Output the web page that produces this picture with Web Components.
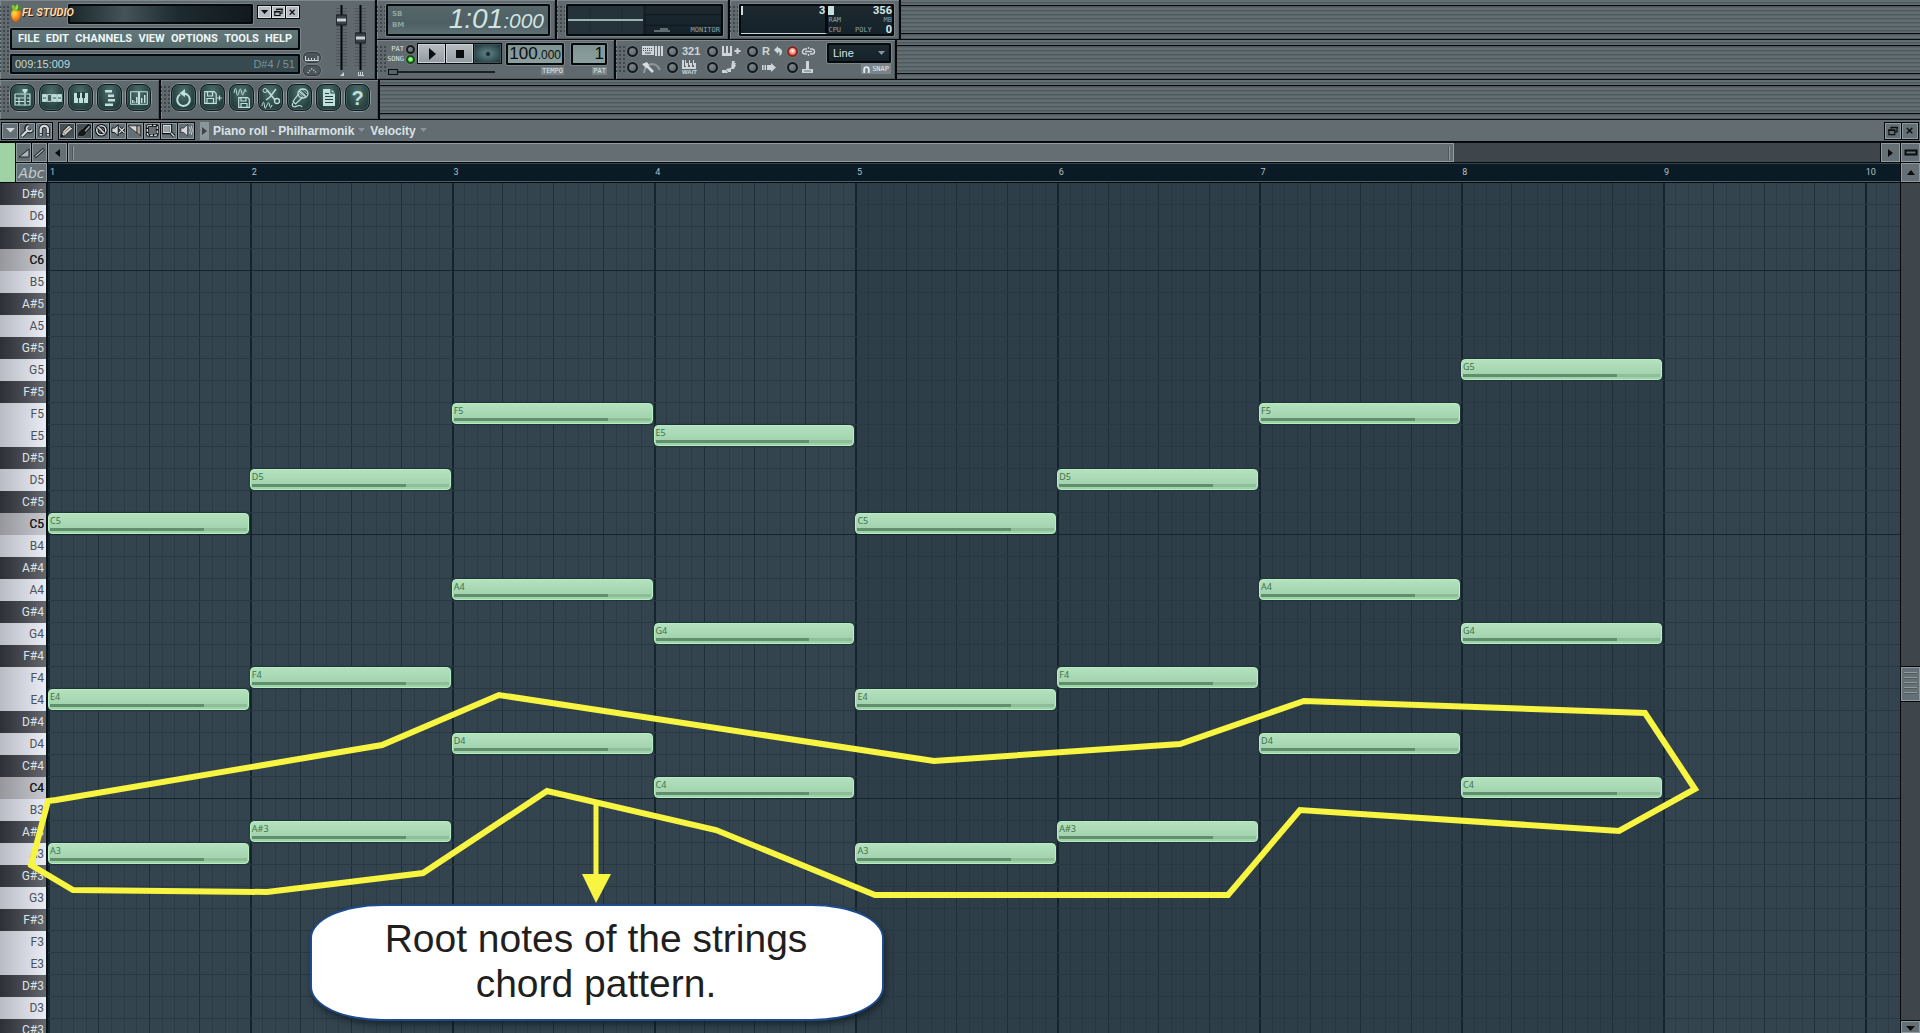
<!DOCTYPE html>
<html lang="en">
<head>
<meta charset="utf-8">
<title>FL Studio - Piano roll</title>
<style>
  html, body { margin: 0; height: 100%; }
  body { overflow: hidden; background: #5d676c; font-family: "Liberation Sans", Arial, sans-serif; }
</style>
</head>
<body>
<fl-studio></fl-studio>
<script>
const BASE = `*{box-sizing:border-box} button,select,input{margin:0;font:inherit;color:inherit}
button{padding:0;border:0;background:none;display:grid;place-items:center;cursor:pointer}`;
function define(name, css, html) {
  const t = document.createElement('template');
  customElements.define(name, class extends HTMLElement {
    constructor() { super(); this.attachShadow({ mode: 'open' }); }
    connectedCallback() {
      if (this.shadowRoot.childNodes.length) return;
      t.innerHTML = `<style>${BASE}${css}</style>` + (typeof html === 'function' ? html(this) : html);
      this.shadowRoot.append(t.content.cloneNode(true));
    }
  });
}

/* ---------- icons: [width, height, markup] ---------- */
const L = '#bfe0dc', K = '#0b0d0e', W = '#d3d8da';
const ln = (d, c = L, w = 1.5, x = '') => `<path d="${d}" fill="none" stroke="${c}" stroke-width="${w}" ${x}/>`;
const fl = (d, c = L, x = '') => `<path d="${d}" fill="${c}" ${x}/>`;
const ICONS = {
  fruit: [12, 18, `<defs><radialGradient id="g" cx=".35" cy=".3" r=".8"><stop offset="0" stop-color="#ffe34a"/><stop offset=".45" stop-color="#ff9a1c"/><stop offset="1" stop-color="#c8430a"/></radialGradient></defs>
    <path d="M7 6C10 5 12 8 11 11c-1 4-3 7-5 7-3 0-5-5-5-8 0-4 3-5 6-4z" fill="url(#g)"/>
    <path d="M5 7C2 6 1 3 2 1c3 0 5 2 4 6z" fill="#7fbf2c"/><path d="M6 7c0-3 2-5 5-5 1 2-1 5-5 5z" fill="#3f8f22"/><path d="M6 7C5 4 6 2 7 0c2 2 1 5-1 7z" fill="#a6d94a"/>`],
  down: [9, 6, fl('M0 0h9L4.500 5z', K)],
  downlt: [10, 6, fl('M0 0h10L5 5z', W)],
  downdim: [7, 5, fl('M0 0h7L3.500 4z', '#8a949a')],
  restore: [11, 10, ln('M3.500 3V1.500h6.500V6.500H8M1 4.500h6.500v5H1z', K, 1.3) + fl('M3 1h8v1.500H3zM0 4h8v1.500H0z', K)],
  close: [8, 8, ln('M1 1l6 6M7 1L1 7', K, 1.6)],
  left: [5, 8, fl('M5 0v8L0 4z', K)],
  right: [5, 8, fl('M0 0v8l5-4z', K)],
  up: [8, 5, fl('M0 5h8L4 0z', K)],
  bar: [14, 7, `<rect x="1.500" y="1.500" width="11" height="4" fill="none" stroke="${K}" stroke-width="2"/>`],
  play: [8, 12, fl('M1 0v12l7-6z', K)],
  stop: [8, 8, fl('M0 0h8v8H0z', K)],
  rec: [8, 8, `<circle cx="4" cy="4" r="2.500" fill="#1a2a2c" stroke="#5c7b7e" stroke-width=".7"/>`],
  playlist: [18, 18, ln('M1 5h9M1 5v11h9M1 9h9M1 12.500h9M5 9v7M12 5h4v11h-4M13 9h3M13 12.500h3', L, 1.2) + fl('M8.500 0h5v2L11.700 4v13h-1.400V4L8.500 2z')],
  steps: [20, 8, [0, 5, 10, 15].map((x, i) => `<rect x="${x + .6}" y=".6" width="3.800" height="6.800" fill="${i == 1 ? '#3f5f5f' : L}" stroke="${L}" stroke-width=".9"/>` + fl(`M${x + 1} 3.500h3v1h-3z`, '#34524f')).join('')],
  keys: [16, 12, fl('M1 1h4v10H1zM6 1h4v10H6zM11 1h4v10h-4z') + fl('M4 0h3v6H4zM9 0h3v6H9z', '#26403f')],
  browser: [10, 16, fl('M0 0h7v2.500H0zM3 4.500h6V7H3zM3 9h7v2.500H3zM0 13.500h8V16H0z')],
  mixer: [18, 14, ln('M.7.700h7.800v12.600H.7zM9.500.700h7.800v12.600H9.500z', L, 1.1) + fl('M2 9h1.500v3H2zM4.200 10.500h1V12h-1zM6 6h1.500v6H6zM11 7h1.500v5H11zM14 4h1.500v8H14z')],
  undo: [17, 18, ln('M5 5.500A6.300 6.300 0 1 0 12 5.500L8 4', L, 2) + fl('M10 0L4.500 4.200 10 8z')],
  save: [18, 15, ln('M.7 1.700h9.500l2 2v9.600H.7z', L, 1.2) + ln('M3.500 2v4h5V2M3 13V8.500h6.500V13M13 8h5M15.500 5.500v5', L, 1.2)],
  savewav: [18, 20, ln('M1 5c1-6 2-6 2.500-1s1.500 4 2.500 0 1.500-4 2.500 0 1.500 4 2.500 0 1.500-4 2 0', L, 1) + ln('M5.700 9.700h9l1.600 1.600v8H5.700zM8 10v3h5v-3M8 19v-3.500h6V19', L, 1.2)],
  cut: [20, 20, ln('M6 2l8 10M15 1L9 9l-4 3', L, 1.5) + `<circle cx="4" cy="2.500" r="2" fill="none" stroke="${L}"/><circle cx="16" cy="13" r="2.500" fill="none" stroke="${L}" stroke-width="1.300"/>` + ln('M1 18c1-5 2-5 2.500 0s1.500 1 2.500-1 1.500-4 2.500 0 1.500 3 2.500 0', L, 1)],
  mic: [18, 20, `<ellipse cx="12" cy="5.500" rx="5" ry="4.500" fill="none" stroke="${L}" stroke-width="1.300"/>` + ln('M8 3l7 6M7.500 6L2 13.500l2.500 2.500L11 10M2 15c-2 3 1 5 4 3 3-1 4-1 5 1', L, 1.2) + ln('M9 2l6 6M11 1l5 5M8 5l4 4', L, .6)],
  doc: [14, 17, fl('M1 0h8l4 4v13H1z') + ln('M3 4.500h4M3 7.500h8M3 10.500h8M3 13.500h8M9 0v4h4', '#234240', 1.1)],
  wrench: [15, 15, ln('M2 13.500L9 6.500', '#1a1e20', 4.5) + ln('M9.500 1.500A3.500 3.500 0 1 0 13.500 6', '#1a1e20', 4) + ln('M2 13.500L9 6.500', W, 2.5) + ln('M9.500 2A3.200 3.200 0 1 0 13.500 6', W, 2)],
  magnet: [14, 14, ln('M3 13.500V6a4 4 0 0 1 8 0v7.500', '#1a1e20', 4.6) + ln('M3 13V6a4 4 0 0 1 8 0v7', W, 2.6) + fl('M1.500 10h3v1h-3zM9.500 10h3v1h-3z', '#3a4043')],
  pencil: [15, 15, fl('M1 14l2-6L10 1l4 4-8 8z', '#d9d4c6', `stroke="${K}"`) + ln('M5 9l7-6M7 11l7-6M3 9l4 4', '#5a5c58', 1) + fl('M1 14l1-3 2 2z', K)],
  brush: [16, 15, fl('M0 13c1-4 3-6 6-8l5 5c-2 4-6 5-11 3z', '#15181a', 'stroke="#99a2a6" stroke-width=".5"') + ln('M8 8L14.500 1.500', K, 5) + ln('M9 8L14 2.500', '#9ba3a7', 1.8)],
  no: [14, 14, `<circle cx="7" cy="7" r="5" fill="none" stroke="${K}" stroke-width="4"/><circle cx="7" cy="7" r="5" fill="none" stroke="${W}" stroke-width="1.800"/>` + ln('M3.500 3.500l7 7', K, 3.5) + ln('M3.500 3.500l7 7', W, 1.8)],
  mute: [16, 14, fl('M1 4.500h3L8 1v12L4 9.500H1z', W, `stroke="${K}"`) + ln('M9 4l6 6M15 4l-6 6', K, 3.2) + ln('M9 4l6 6M15 4l-6 6', W, 1.5)],
  slice: [16, 14, fl('M0 2h10v8z', W, `stroke="${K}" stroke-width=".7"`) + fl('M10 2h4v11l-4-3z', '#a9a196', `stroke="${K}" stroke-width=".7"`)],
  select: [14, 14, `<rect x="1.500" y="1.500" width="11" height="11" rx="2" fill="none" stroke="${K}" stroke-width="3"/><rect x="1.500" y="1.500" width="11" height="11" rx="2" fill="none" stroke="${W}" stroke-width="1.500" stroke-dasharray="3 1.500"/>`],
  zoom: [15, 15, fl('M1 1h9v9H1z', '#98a2a6', `stroke="${K}" stroke-width="2.500"`) + ln('M1.500 1.500h8v8h-8z', W, 1.2) + ln('M9.500 9.500l4 4', K, 3.6) + ln('M10 10l3.500 3.500', W, 1.6)],
  speaker: [14, 14, fl('M1 4.500h3L8.500.500v13L4 9.500H1z', W, `stroke="${K}" stroke-width=".7"`) + ln('M10.500 3q2 4 0 8M12.500 2q2.500 5 0 10', W, 1)],
  tri: [12, 10, fl('M1 9L11 1v8z', '#aab3b7', `stroke="${K}" stroke-width=".8"`)],
  line: [11, 10, ln('M1 9L10 1', K, 3) + ln('M1.500 8.500l8-7', '#b8c0c4', 1.3)],
  kbd: [21, 11, fl('M0 0h12v9H0z', '#cdd5d8') + ln('M1 2.500h10M1 4.500h10', '#49555a', 1, 'stroke-dasharray="1 1"') + ln('M3 7h6', '#49555a', 1) + fl('M13 0h2v10h-2zM16 0h2v10h-2zM19 0h2v10h-2z', '#cdd5d8')],
  wait: [14, 9, fl('M0 0h2v9H0zM3 0h1v6H3zM4 3h2v6H4zM7 0h1v5H7zM8 3h2v6H8zM11 0h1v5h-1zM12 3h2v6h-2zM0 7h14v2H0z', '#cdd5d8')],
  keysplus: [19, 11, fl('M0 0h2v10H0zM4 0h2v10H4zM8 0h2v10H8zM0 7h10v3H0z', '#cdd5d8') + ln('M12.500 5h6M15.500 2v6', '#cdd5d8', 2)],
  turn: [8, 10, fl('M4 0v2c3 0 4 2 4 4s-1 3-3 4c1-2 1-4-1-4v2L0 4z', '#cdd5d8')],
  link: [13, 9, ln('M5 2H3a2.500 2.500 0 0 0 0 5h2M8 2h2a2.500 2.500 0 0 1 0 5H8M3 4.500h7M6.500 0v2M6.500 7v2', '#cdd5d8', 1.4)],
  blend: [19, 13, ln('M2 12C3 3 13-1 18 9', '#8d979b', 2.2) + ln('M3 3l8 8', '#d7dee0', 2.6) + fl('M0 3l5-2 2 3-3 3z', '#d7dee0')],
  stair: [14, 12, fl('M10 0h3l-1 2h2l-1 2h1l-2 4H9zM4 8l5-1v4H6zM0 9h4l2 3H0z', '#cdd5d8')],
  arrows: [14, 9, fl('M0 2h1.500v5H0zM2.500 2H4v5H2.500zM5 2h4V0l5 4.500L9 9V7H5z', '#cdd5d8')],
  joy: [11, 13, fl('M4 0h3v8H4zM0 8h11v4H0z', '#cdd5d8') + fl('M2 9.500h7v1H2z', '#6a767b')],
  mag2: [7, 7, ln('M1.200 7V3.500a2.300 2.300 0 0 1 4.600 0V7', '#e3e9ea', 1.8)],
  wave: [22, 6, ln('M0 4h6M7 5V1M9 1v4M11 5V1M13 1v4M15 5V3', '#a5babd', 1)],
};
define('fl-icon', ':host{display:block;line-height:0} svg{display:block;overflow:visible}',
  h => { const [w, t, m] = ICONS[h.getAttribute('name')]; return `<svg width="${w}" height="${t}" viewBox="0 0 ${w} ${t}" aria-hidden="true">${m}</svg>`; });
const ic = n => `<fl-icon name="${n}"></fl-icon>`;

/* ---------- chrome ---------- */
define('fl-panel', `
  :host{display:flex;height:100%;flex:none;border-right:2px solid #060809;border-bottom:1px solid #060809;
    background:#5f696e;box-shadow:inset 1px 1px #7d888d,inset -1px -1px #4e585c}
  .grip{width:9px;flex:none;margin:5px 0;background:radial-gradient(circle at 2px 2px,#3e474b 0 1px,transparent 1px) 2px 0/4px 4px repeat}
  .body{flex:1;min-width:0;display:flex}`,
  '<div class="grip"></div><div class="body"><slot></slot></div>');

define('fl-rack', `
  :host{display:block;flex:1;height:40px;
    background:linear-gradient(#060809,#060809) 0 5px/100% 1px no-repeat,linear-gradient(#060809,#060809) 0 33px/100% 1px no-repeat,
    linear-gradient(#060809,#060809) 0 39px/100% 1px no-repeat,repeating-linear-gradient(#626e72 0 2px,#4f595e 2px 3px,#59646a 3px 4px)}`, '');

define('fl-lcd', `
  :host{display:flex;border:2px solid #05090b;border-radius:1px;outline:1px solid #78848a;color:#c4d8d8}
  :host([tone=green]){background:linear-gradient(#56686a,#4d5f62 60%,#5d7072)}
  :host([tone=menu]){background:linear-gradient(#64787b,#566a6c)}
  :host([tone=hint]){background:#374a4f}
  :host([tone=pale]){background:linear-gradient(#7f9393,#8ca09f);color:#0a0f10}
  :host([tone=dark]){background:linear-gradient(#1d292f,#16222a)}`, '<slot></slot>');

define('fl-led', `
  :host{display:block;width:11px;height:11px}
  input{appearance:none;display:block;width:11px;height:11px;border-radius:50%;border:2px solid #14191b;outline:1px solid #87928f55;
    background:radial-gradient(circle at 35% 30%,#7c878b,#59646a)}
  :host([tone=red]) input:checked{background:radial-gradient(circle at 50% 40%,#fff,#ff7a66 60%,#f04a3c);border-color:#7d2a24}
  :host([tone=green]) input{width:9px;height:9px}
  :host([tone=green]){width:9px;height:9px}
  :host([tone=green]) input:checked{background:radial-gradient(circle at 50% 40%,#d8ffd0,#45f03c 60%,#1fb01b);border-color:#1c4a1a}`,
  h => `<input type="${h.getAttribute('kind') || 'checkbox'}" aria-label="${h.getAttribute('label')}" ${h.hasAttribute('on') ? 'checked' : ''}>`);

define('fl-main', `
  :host{display:block;width:377px;height:80px;flex:none}
  fl-panel{height:80px}
  .left{width:290px;flex:none;margin:4px 0 0 1px;display:flex;flex-direction:column}
  .top{display:flex;height:20px}
  .brand{display:flex;width:58px;flex:none;position:relative;z-index:1}
  .brand b{font:italic bold 11px/18px Roboto,"Liberation Sans",sans-serif;color:#ffd9a8;text-shadow:1px 1px #301c0c;white-space:nowrap}
  .screen{flex:1;background:linear-gradient(90deg,#1b272b,#445459 30%,#1d2a2f 60%,#11191d)}
  .win{display:flex;margin:1px 0 5px 4px;border:1px solid #05090b;background:#05090b;gap:1px;align-self:start}
  .win button{width:13px;height:12px;background:#b4bcc1;border:1px solid #dbe0e3}
  .win fl-icon{zoom:.8}
  nav{display:flex;flex:1;align-items:center;justify-content:space-between;padding:0 6px}
  nav a{color:#eef7f7;text-decoration:none;font:bold 11px/16px Roboto,"Liberation Sans",sans-serif}
  .menu{height:22px;margin-top:4px}
  .hint{height:20px;margin-top:4px;align-items:center;justify-content:space-between;padding:0 3px;font-size:11px;line-height:16px}
  .hint span:last-child{color:#7e9298}
  .mini{display:flex;flex-direction:column;justify-content:flex-end;gap:2px;width:18px;flex:none;margin:0 0 3px 3px}
  .mini button{height:11px;border-radius:5px;background:#4b555a;border:1px solid #343c40;outline:1px solid #727d82}
  .mini svg,.fader svg{display:block}
  .faders{flex:1;display:flex;justify-content:center;gap:8px;padding:5px 0 0 6px}`,
  `<fl-panel><div class="left">
    <div class="top"><div class="brand">${ic('fruit')}<b>FL STUDIO</b></div><fl-lcd class="screen"></fl-lcd>
      <div class="win"><button aria-label="Minimize">${ic('down')}</button><button aria-label="Restore">${ic('restore')}</button><button aria-label="Close">${ic('close')}</button></div></div>
    <fl-lcd tone="menu" class="menu"><nav>${['FILE', 'EDIT', 'CHANNELS', 'VIEW', 'OPTIONS', 'TOOLS', 'HELP'].map(t => `<a href="#">${t}</a>`).join('')}</nav></fl-lcd>
    <fl-lcd tone="hint" class="hint"><span>009:15:009</span><span>D#4 / 51</span></fl-lcd></div>
    <div class="mini"><button aria-label="Meter"><svg width="14" height="6"><path d="M.5 1v4M3.500 3v2M6.500 3v2M9.500 3v2M13 1v4M0 5.500h14" stroke="#cfd8da" fill="none"/></svg></button>
      <button aria-label="Scope"><svg width="14" height="6"><path d="M3 5l1-2 3-2 3 2 1 2" stroke="#cfd8da" stroke-dasharray="1 1.500" fill="none" stroke-width="1.500"/></svg></button></div>
    <div class="faders">${[[16, 'M1 4l4-4v4z'], [34, 'M0 0h1v4H0zM2 0h1v4H2zM4 0h1v4H4zM0 3h6v1H0z']].map(([y, d]) => `<div class="fader"><svg width="11" height="72">
      <path d="M2 3v60M9 3v60" stroke="#4c565b" stroke-width="4" stroke-dasharray="1 2"/><path d="M5.500 0v65" stroke="#05090b" stroke-width="2"/>
      <rect x="0" y="${y - 6}" width="11" height="10" rx="1" fill="#394247" stroke="#15191b"/><path d="M1 ${y - 1}h9" stroke="#c9d1d4" stroke-width="3"/>
      <path d="${d}" transform="translate(3 67)" fill="#c9d1d4"/></svg></div>`).join('')}</div></fl-panel>`);

define('fl-displays', `
  :host{display:flex;height:40px}
  fl-lcd{margin:4px 5px 3px 0}
  .time{width:180px}.scope{width:173px}.cpu{width:171px}
  .clock{flex:1;padding:0 4px;align-items:center;justify-content:space-between}
  .sb{font:bold 7px/11px "DejaVu Sans",sans-serif;color:#8fa3a4}
  .num{font:italic 28px/28px "Liberation Sans",Arial,sans-serif;color:#d0e4e3;white-space:nowrap}
  .num small{font-size:21px}
  .mon{flex:1;position:relative}
  .mon svg{display:block;width:100%;height:100%}
  .tag{position:absolute;right:1px;bottom:0;font:7px/8px "DejaVu Sans Mono",monospace;color:#8ba2a6}
  .mw{position:absolute;left:86px;bottom:1px}
  .load{flex:1}
  .a,.b{display:flex;flex-direction:column;justify-content:space-between}
  .a{flex:85;border-right:3px solid #05090b;border-bottom:1px solid #c4d8d8}
  .b{flex:64;font:7px/8px "DejaVu Sans Mono",monospace;color:#8ba2a6}
  .r{display:flex;justify-content:space-between;align-items:center;height:9px}
  .r b{font:bold 11px/10px Roboto,"Liberation Sans",sans-serif;color:#d5e9e8}
  .r i{height:9px;background:#c9dede;width:2px}.b .r i{width:6px}`,
  `<fl-panel class="time"><fl-lcd tone="green" class="clock"><div class="sb"><div>SB</div><div>BM</div></div><div class="num">1:01<small>:000</small></div></fl-lcd></fl-panel>
   <fl-panel class="scope"><fl-lcd tone="dark" class="mon"><svg viewBox="0 0 151 29" preserveAspectRatio="none"><path d="M0 0h74v29H0z" fill="#26323a"/><path d="M75 9h76M75 20h76M76 0v29" stroke="#0e171c"/><path d="M22 0v29M53 0v29" stroke="#212c33"/><path d="M0 14.500h74" stroke="#c2e0dd" stroke-width="1.500"/></svg><fl-icon class="mw" name="wave"></fl-icon><span class="tag">MONITOR</span></fl-lcd></fl-panel>
   <fl-panel class="cpu"><fl-lcd tone="dark" class="load"><div class="a"><div class="r"><i></i><b>3</b></div></div>
     <div class="b"><div class="r"><i></i><b>356</b></div><div class="r"><span>RAM</span><span>MB</span></div><div class="r"><span>CPU</span><span>POLY</span><b>0</b></div></div></fl-lcd></fl-panel>
   <fl-rack></fl-rack>`);

define('fl-transport', `
  :host{display:flex;height:40px}
  .tr{width:239px}.op{width:281px}
  .grp{display:flex;flex-direction:column;flex:1}
  .ctl{display:flex;gap:2px;height:22px;margin:3px 0 0 1px}
  .ps{display:grid;grid-template-columns:17px 9px;column-gap:2px;row-gap:1px;align-content:center;align-items:center;justify-items:end;font:7px/9px "DejaVu Sans Mono",monospace;color:#dbe2e3}
  .btns{display:flex;border:1px solid #05090b;gap:1px;background:#05090b;height:21px}
  .btns button{width:27px;background:linear-gradient(#b5bcc0,#949da2);border:1px solid #ccd2d5}
  .btns button:last-child{background:radial-gradient(#64878b,#1d3338);border-color:#3c5458}
  input[type=range]{appearance:none;display:block;width:107px;height:8px;margin:3px 0 0 2px;background:linear-gradient(#1a2226,#1a2226) 0 3px/100% 2px no-repeat}
  input[type=range]::-webkit-slider-thumb{appearance:none;width:10px;height:6px;background:#59646a;border:1px solid #0b0f11}
  .n{display:flex;flex-direction:column;align-items:flex-end;flex:none;margin:3px 7px 0 0;gap:2px}
  .n fl-lcd{height:22px;align-items:baseline;justify-content:flex-end;padding-right:1px;font:17px/18px "Liberation Sans",Arial,sans-serif}
  .n small{font-size:12px}
  .t fl-lcd{width:58px}.p fl-lcd{width:36px}
  .tag{font:7px/8px "DejaVu Sans Mono",monospace;color:#dfe6e8;background:#78838a;padding:0 1px}
  .g{display:grid;grid-template-columns:repeat(5,40px);grid-auto-rows:16px;align-items:center;margin:3px 0 0 2px;height:32px}
  .c{display:flex;align-items:center;gap:4px}
  .c b{font:bold 11px/12px "Liberation Sans",sans-serif;color:#cdd5d8}
  .stack{display:flex;flex-direction:column;font:bold 6px/6px "Liberation Sans",sans-serif;color:#cdd5d8}
  .sn{flex:1;display:flex;flex-direction:column;align-items:flex-end;margin:3px 5px 0 0}
  .sn fl-lcd{width:64px;height:20px;align-items:center;position:relative}
  select{appearance:none;border:0;background:transparent;width:100%;height:16px;padding:0 4px;font:11px/16px "Liberation Sans",sans-serif;color:#d5e4e6}
  .dd{position:absolute;right:4px;top:6px;pointer-events:none}
  .snap{display:flex;align-items:center;gap:2px;padding:0 2px;background:#78838a;height:10px;margin-top:1px;font:7px/10px "DejaVu Sans Mono",monospace;color:#e3e9ea}`,
  `<fl-panel class="tr"><div class="grp"><div class="ctl"><div class="ps"><span>PAT</span><fl-led tone="green" kind="radio" label="Pattern mode"></fl-led><span>SONG</span><fl-led tone="green" kind="radio" label="Song mode" on></fl-led></div>
     <div class="btns"><button aria-label="Play">${ic('play')}</button><button aria-label="Stop">${ic('stop')}</button><button aria-label="Record">${ic('rec')}</button></div></div>
     <input type="range" min="0" max="100" value="0" aria-label="Song position"></div>
     <div class="n t"><fl-lcd tone="pale"><span>100<small>.000</small></span></fl-lcd><span class="tag">TEMPO</span></div>
     <div class="n p"><fl-lcd tone="pale"><span>1</span></fl-lcd><span class="tag">PAT</span></div></fl-panel>
   <fl-panel class="op"><div class="g">
     ${[['Typing keyboard', ic('kbd')], ['Countdown', '<b>321</b>'], ['Blend notes', ic('keysplus')], ['Loop record', `<b>R</b>${ic('turn')}`], ['Multilink', ic('link'), 1],
        ['Overdub', ic('blend')], ['Wait for input', `<span class="stack">${ic('wait')}<span>WAIT</span></span>`], ['Step edit', ic('stair')], ['Auto-scroll', ic('arrows')], ['Controller', ic('joy')]]
       .map(([l, x, on]) => `<div class="c"><fl-led tone="red" label="${l}" ${on ? 'on' : ''}></fl-led>${x}</div>`).join('')}
     </div><div class="sn"><fl-lcd tone="dark"><select aria-label="Snap"><option>Line</option></select><fl-icon class="dd" name="downdim"></fl-icon></fl-lcd><span class="snap">${ic('mag2')}SNAP</span></div></fl-panel>
   <fl-rack></fl-rack>`);

define('fl-shortcuts', `
  :host{display:flex;height:40px}
  .one{width:161px}.two{width:219px}
  .r{display:flex;gap:2px;margin:3px 0 0 0}
  button{width:27px;height:29px;border-radius:9px;border:2px solid #101a1b;outline:1px solid #8d989c;outline-offset:-1px;
    background:radial-gradient(ellipse at 50% 30%,#4f7170,#2b4645 60%,#1c3030);box-shadow:inset 0 0 0 1px #3e5b5a}
  .q{font:bold 20px/20px "Liberation Sans",sans-serif;color:#bfe0dc}`,
  `<fl-panel class="one"><div class="r">${[['Playlist', 'playlist'], ['Step sequencer', 'steps'], ['Piano roll', 'keys'], ['Browser', 'browser'], ['Mixer', 'mixer']].map(([l, n]) => `<button aria-label="${l}">${ic(n)}</button>`).join('')}</div></fl-panel>
   <fl-panel class="two"><div class="r">${[['Undo', 'undo'], ['Save new version', 'save'], ['Render', 'savewav'], ['Edit audio', 'cut'], ['Record audio', 'mic'], ['Project info', 'doc']].map(([l, n]) => `<button aria-label="${l}">${ic(n)}</button>`).join('')}<button class="q">?</button></div></fl-panel>
   <fl-rack></fl-rack>`);

define('fl-header', `
  :host{display:block}
  .row{display:flex;align-items:stretch}
  .col{flex:1;min-width:0}`,
  '<div class="row"><fl-main></fl-main><div class="col"><fl-displays></fl-displays><fl-transport></fl-transport></div></div><fl-shortcuts></fl-shortcuts>');

/* ---------- piano roll ---------- */
const BTN = `.b{background:#647075;border:1px solid #8f9a9e}`;
define('roll-title', `${BTN}
  :host{display:flex;align-items:center;height:22px;background:#626c71;border-bottom:1px solid #05090b;padding:0 1px;
    font:bold 12px/16px "Liberation Sans",sans-serif;color:#d9e2e6}
  .g{display:flex;gap:1px;padding:1px;background:#05090b;margin-right:5px}
  .g .b{width:16px;height:16px;overflow:hidden}
  .g .on{background:#454f54}
  .g fl-icon{zoom:.9}
  .h{width:9px;height:18px;background:#8b969b;display:grid;place-items:center;margin-right:4px}
  .h fl-icon{opacity:.6}
  a{color:inherit;text-decoration:none;display:flex;align-items:center;gap:4px;margin-right:5px}
  .x{margin-left:auto;margin-right:0}`,
  `<div class="g">${[['Menu', 'downlt'], ['Tools', 'wrench'], ['Snap', 'magnet']].map(([l, n]) => `<button class="b" aria-label="${l}">${ic(n)}</button>`).join('')}</div>
   <div class="g">${[['Draw', 'pencil', 'on'], ['Paint', 'brush', 'on'], ['Delete', 'no'], ['Mute', 'mute'], ['Slice', 'slice'], ['Select', 'select'], ['Zoom', 'zoom'], ['Playback', 'speaker']].map(([l, n, o]) => `<button class="b ${o || ''}" aria-label="${l}">${ic(n)}</button>`).join('')}</div>
   <span class="h">${ic('right')}</span><a href="#">Piano roll - Philharmonik ${ic('downdim')}</a><a href="#">Velocity ${ic('downdim')}</a>
   <div class="g x"><button class="b" aria-label="Restore">${ic('restore')}</button><button class="b" aria-label="Close">${ic('close')}</button></div>`);

define('roll-head', `${BTN}
  :host{display:grid;grid-template-columns:15px 31px 1fr 19px;grid-template-rows:19px 19px;gap:1px;background:#05090b;padding:1px 0}
  .sw{grid-row:span 2;background:#9fd3a6}
  .two{display:grid;grid-template-columns:1fr 1fr;gap:1px}
  .abc{font:italic 14px/16px "DejaVu Sans","Liberation Sans",sans-serif;color:#c3ccd0}
  .sc{display:flex;gap:1px;background:#05090b}
  .sc .b{width:19px}
  .track{flex:1;display:flex;background:#3e454b}
  .thumb{width:76.500%;background:#646e73;border:1px solid #939da1;display:flex;justify-content:space-between;align-items:center;padding:0 3px}
  .thumb i{width:2px;height:14px;background:#4c565b;border-right:1px solid #8f9a9e}
  .ruler{display:grid;grid-template-columns:repeat(9,40fr) 7fr;background:#0b1b25;border-top:1px solid #32454f;border-bottom:1px solid #4a5f68;padding-left:1px;
    font:9px/17px Roboto,"Liberation Sans",sans-serif;color:#b3c0c5}
  .ruler span{min-width:0;white-space:nowrap;padding-left:1px}`,
  `<div class="sw"></div><div class="two"><button class="b" aria-label="Ramp">${ic('tri')}</button><button class="b" aria-label="Line">${ic('line')}</button></div>
   <div class="sc"><button class="b" aria-label="Scroll left">${ic('left')}</button><div class="track"><div class="thumb"><i></i><i></i></div></div><button class="b" aria-label="Scroll right">${ic('right')}</button></div>
   <button class="b" aria-label="Toggle pane">${ic('bar')}</button>
   <button class="b abc">Abc</button><div class="ruler">${Array.from({ length: 10 }, (_, i) => `<span>${i + 1}</span>`).join('')}</div>
   <button class="b" aria-label="Scroll up">${ic('up')}</button>`);

const NAMES = ['C', 'C#', 'D', 'D#', 'E', 'F', 'F#', 'G', 'G#', 'A', 'A#', 'B'];
const midi = n => { const m = n.match(/^([A-G]#?)(\d)$/); return NAMES.indexOf(m[1]) + 12 * m[2]; };
const TOP = midi('D#6'), ROWS = 39;

define('roll-keys', `
  :host{display:block;width:48px;flex:none;border-right:2px solid #0a1419;font:12px/22px Roboto,"Liberation Sans",sans-serif}
  div{height:22px;text-align:right;padding-right:2px;color:#4d5259;background:linear-gradient(90deg,#b9bcc4,#d6d9e1 60%,#e9ecf5)}
  .s{color:#dfe2e6;background:linear-gradient(90deg,#2e3037,#4b4e55 60%,#65686f)}
  .c{color:#1b1d20;background:linear-gradient(90deg,#96979b,#b4b5ba 60%,#c6c8ce);text-shadow:0 0 #1b1d20}`,
  Array.from({ length: ROWS }, (_, i) => { const m = TOP - i, n = NAMES[m % 12]; return `<div class="${n[1] ? 's' : n == 'C' ? 'c' : ''}">${n}${Math.floor(m / 12)}</div>`; }).join(''));

define('roll-note', `
  :host{display:flex;flex-direction:column;justify-content:space-between;height:21px;margin:0 1px 0 0;border-radius:4px;border:1px solid #b4f0bf;
    background:linear-gradient(#b4e0be,#9dd0a9);padding:1px 1px 2px;box-shadow:0 0 2px #16222a;min-width:0}
  span{font:9px/11px "Noto Sans","Open Sans",sans-serif;color:#3d7449}
  i{display:block;height:3px;background:linear-gradient(90deg,#628f6b 78%,#8fbd98 78%)}`,
  h => `<span>${h.getAttribute('pitch')}</span><i></i>`);

const CHORDS = [['C5', 'E4', 'A3'], ['D5', 'F4', 'A#3'], ['F5', 'A4', 'D4'], ['E5', 'G4', 'C4'], ['C5', 'E4', 'A3'], ['D5', 'F4', 'A#3'], ['F5', 'A4', 'D4'], ['G5', 'G4', 'C4']];
define('roll-grid', `
  :host{display:grid;grid-template-columns:repeat(9,40fr) 7fr;grid-template-rows:repeat(${ROWS},22px);flex:1;min-width:0;background:#33444e;overflow:hidden}
  .bar{grid-row:1/-1;display:grid;grid-template-columns:repeat(16,1fr);min-width:0;background:#33444e;overflow:hidden}
  .bar.d{background:#2e3e48}
  .bar i{border-left:1px solid #2c3b45}
  .bar.d i{border-left-color:#273640}
  .bar i:nth-child(4n+1){border-left-color:#1f2f38}
  .bar i:first-child{border-left:2px solid #14242d}
  .bar.last{grid-template-columns:repeat(3,1fr)}
  .rows{grid-area:1/1/-1/-1;background:repeating-linear-gradient(transparent 0 21px,#293943 21px 22px)}
  hr{grid-column:1/-1;align-self:end;margin:0;border:0;height:1px;background:#15252e}
  roll-note{z-index:1}`,
  () => Array.from({ length: 10 }, (_, b) => `<div class="bar ${b > 3 && b < 8 ? 'd' : ''} ${b == 9 ? 'last' : ''}" style="grid-column:${b + 1}">${'<i></i>'.repeat(b == 9 ? 3 : 16)}</div>`).join('')
    + '<div class="rows"></div>'
    + ['C6', 'C5', 'C4'].map(c => `<hr style="grid-row:${TOP - midi(c) + 1}">`).join('')
    + CHORDS.map((c, b) => c.map(p => `<roll-note pitch="${p}" style="grid-area:${TOP - midi(p) + 1}/${b + 1}"></roll-note>`).join('')).join(''));

define('roll-scroll', `${BTN}
  :host{display:flex;flex-direction:column;width:20px;flex:none;background:#3e454b;border-left:1px solid #05090b}
  .up{flex:484;border-bottom:1px solid #05090b}.dn{flex:319;border-top:1px solid #05090b;border-bottom:1px solid #05090b}
  .t{height:34px;flex:none;padding:4px 2px;background:repeating-linear-gradient(#8f9a9e 0 1px,#4f595e 1px 2px,#647075 2px 5px) content-box,#647075}
  .b.z{height:12px;flex:none;align-items:end}`,
  `<div class="up"></div><button class="b t" aria-label="Scroll position"></button><div class="dn"></div><button class="b z" aria-label="Scroll down">${ic('down')}</button>`);

define('roll-callout', `
  :host{position:absolute;inset:0;pointer-events:none}
  svg{position:absolute;inset:0;width:100%;height:1033px;overflow:visible}
  .box{position:absolute;left:310px;top:904px;width:574px;height:117px;display:flex;align-items:center;justify-content:center;text-align:center;background:#fff;border:2px solid #1d4b8f;
    border-radius:72px/34px;box-shadow:2px 4px 6px #0b151b99;font:39px/45px "Liberation Sans",Arial,sans-serif;color:#1f1f1f}
  p{margin:0 2px 4px 0}`,
  `<svg viewBox="0 0 1920 1033" preserveAspectRatio="none"><g fill="none" stroke="#f7f541" stroke-width="6" stroke-miterlimit="3">
    <path d="M48 801L56 800L382 745L499 695L934 761L1180 744L1304 701L1645 713L1695 789L1619 831L1300 810L1228 895L875 895L716 830L547 791L423 873L267 892L73 890L31 865Z"/>
    <path d="M596 803V878" stroke-width="5"/></g><path d="M582 874h29L596 903z" fill="#f7f541"/></svg>
   <div class="box"><p><slot></slot></p></div>`);

define('fl-studio', `
  :host{display:flex;flex-direction:column;height:100vh;position:relative;overflow:hidden}
  .edit{flex:1;min-height:0;display:flex;overflow:hidden}`,
  `<fl-header></fl-header><roll-title></roll-title><roll-head></roll-head>
   <div class="edit"><roll-keys></roll-keys><roll-grid></roll-grid><roll-scroll></roll-scroll></div>
   <roll-callout>Root notes of the strings<br>chord pattern.</roll-callout>`);
</script>
</body>
</html>
